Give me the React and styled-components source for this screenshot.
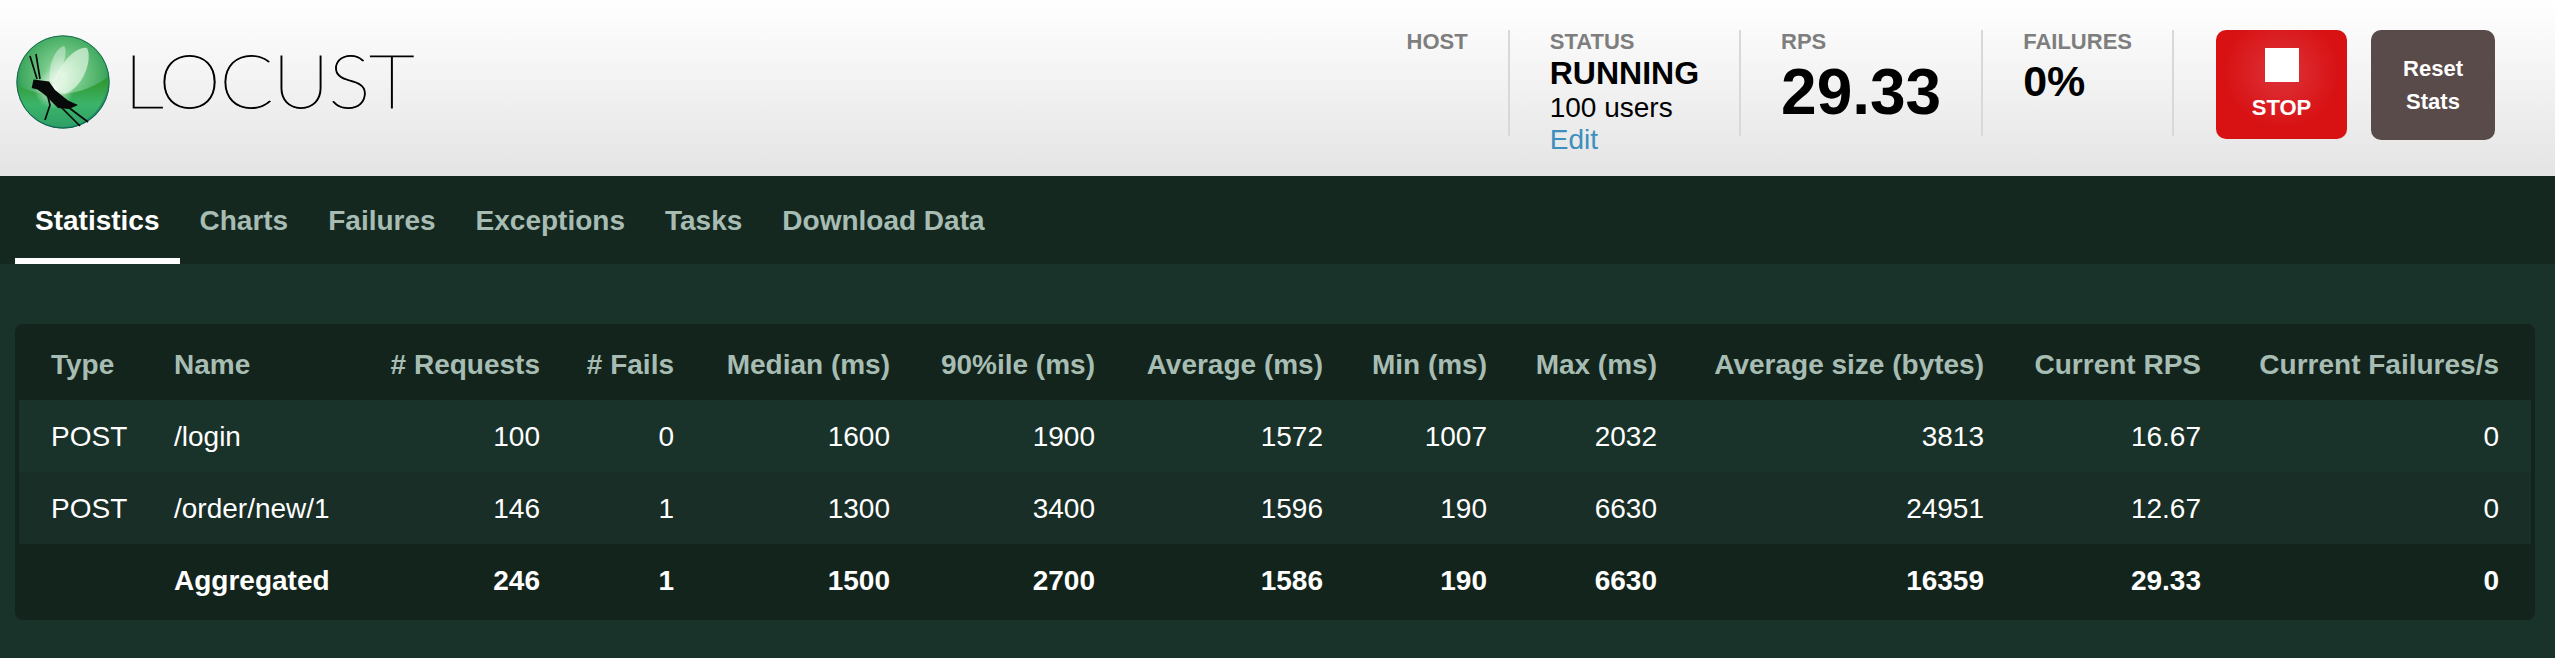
import React from 'react'
import styled, { createGlobalStyle } from 'styled-components'

const GlobalStyle = createGlobalStyle`
  body {
    margin: 0;
    background: #1a332a;
    font-family: "Liberation Sans", Arial, sans-serif;
  }
`

const columns = [
  { label: 'Type', width: 123 },
  { label: 'Name', width: 230 },
  { label: '# Requests', width: 200, right: true },
  { label: '# Fails', width: 134, right: true },
  { label: 'Median (ms)', width: 216, right: true },
  { label: '90%ile (ms)', width: 205, right: true },
  { label: 'Average (ms)', width: 228, right: true },
  { label: 'Min (ms)', width: 164, right: true },
  { label: 'Max (ms)', width: 170, right: true },
  { label: 'Average size (bytes)', width: 327, right: true },
  { label: 'Current RPS', width: 217, right: true },
  { label: 'Current Failures/s', width: 298, right: true },
]

const rows = [
  ['POST', '/login', '100', '0', '1600', '1900', '1572', '1007', '2032', '3813', '16.67', '0'],
  ['POST', '/order/new/1', '146', '1', '1300', '3400', '1596', '190', '6630', '24951', '12.67', '0'],
  ['', 'Aggregated', '246', '1', '1500', '2700', '1586', '190', '6630', '16359', '29.33', '0'],
]

const tabs = ['Statistics', 'Charts', 'Failures', 'Exceptions', 'Tasks', 'Download Data']

const LocustIcon = () => (
  <LogoSvg viewBox="0 0 94 94">
    <defs>
      <radialGradient id="orb" cx="50%" cy="42%" r="58%">
        <stop offset="0%" stopColor="#d8f3d8" />
        <stop offset="35%" stopColor="#74c987" />
        <stop offset="78%" stopColor="#3fa85f" />
        <stop offset="100%" stopColor="#12806a" />
      </radialGradient>
      <linearGradient id="lower" x1="0" y1="0" x2="0" y2="1">
        <stop offset="0%" stopColor="#2f9426" />
        <stop offset="55%" stopColor="#3bb46a" />
        <stop offset="100%" stopColor="#2f9f66" />
      </linearGradient>
      <radialGradient id="glow" cx="50%" cy="50%" r="50%">
        <stop offset="0%" stopColor="#ffffff" stopOpacity="0.95" />
        <stop offset="100%" stopColor="#ffffff" stopOpacity="0" />
      </radialGradient>
    </defs>
    <circle cx="47" cy="47" r="46.5" fill="url(#orb)" />
    <path d="M2 50 C20 62 60 66 92 42 C92 70 72 92 47 92 C20 92 3 72 2 50 Z" fill="url(#lower)" />
    <circle cx="38" cy="54" r="20" fill="url(#glow)" />
    <path d="M34 46 C32 32 38 14 48 11 C52 14 48 34 38 48 Z" fill="#ffffff" fillOpacity="0.4" />
    <path d="M37 50 C42 32 58 11 71 13 C77 24 67 54 48 59 Z" fill="#e6f8e6" fillOpacity="0.68" />
    <circle cx="47" cy="47" r="46.2" fill="none" stroke="#0d5a46" strokeWidth="0.8" />
    <path
      d="M15.7 53 L17.5 44.5 L33 46.5 L39 55 L52 65.5 L62 70 L53 74 L42 73 L29 60 L21.5 54.5 Z"
      fill="#070a08"
    />
    <path
      d="M21 44 L14 21 M24 44 L20 19 M31 58 L34 70 L29 85 M43 70 L64 91 M52 72 L72 87"
      fill="none"
      stroke="#070a08"
      strokeWidth="1.7"
    />
  </LogoSvg>
)

export default function App() {
  return (
    <Page>
      <GlobalStyle />
      <Header>
        <Brand>
          <LocustIcon />
          <Wordmark>LOCUST</Wordmark>
        </Brand>
        <Stats>
          <Stat>
            <Label>HOST</Label>
          </Stat>
          <Stat>
            <Label>STATUS</Label>
            <StatusText>RUNNING</StatusText>
            <UsersText>100 users</UsersText>
            <EditLink>Edit</EditLink>
          </Stat>
          <Stat>
            <Label>RPS</Label>
            <RpsValue>29.33</RpsValue>
          </Stat>
          <Stat>
            <Label>FAILURES</Label>
            <FailValue>0%</FailValue>
          </Stat>
          <StopButton>
            <StopSquare />
            <span>STOP</span>
          </StopButton>
          <ResetButton>
            <span>Reset</span>
            <span>Stats</span>
          </ResetButton>
        </Stats>
      </Header>
      <Nav>
        {tabs.map((tab, i) => (
          <Tab key={tab} $active={i === 0}>
            {tab}
          </Tab>
        ))}
      </Nav>
      <Main>
        <Paper>
          <StatsTable>
            <colgroup>
              {columns.map((c) => (
                <Col key={c.label} $width={c.width} />
              ))}
            </colgroup>
            <thead>
              <tr>
                {columns.map((c) => (
                  <HeadCell key={c.label} $right={c.right}>
                    {c.label}
                  </HeadCell>
                ))}
              </tr>
            </thead>
            <tbody>
              {rows.map((row, r) => (
                <Row key={r} $kind={r}>
                  {row.map((val, i) => (
                    <Cell key={i} $right={columns[i].right} $bold={r === 2}>
                      {val}
                    </Cell>
                  ))}
                </Row>
              ))}
            </tbody>
          </StatsTable>
        </Paper>
      </Main>
    </Page>
  )
}

const Page = styled.div`
  min-height: 100vh;
  display: flex;
  flex-direction: column;
  background: #1a332a;
`

const Header = styled.header`
  height: 176px;
  box-sizing: border-box;
  padding: 30px 60px 0 16px;
  display: flex;
  justify-content: space-between;
  background: linear-gradient(#ffffff, #e4e4e4);
`

const Brand = styled.div`
  display: flex;
  align-items: flex-start;
  gap: 14px;
`

const LogoSvg = styled.svg`
  width: 94px;
  height: 94px;
  margin-top: 5px;
  flex: none;
`

const Wordmark = styled.span`
  font-family: "Lato", sans-serif;
  font-weight: 100;
  font-size: 74px;
  line-height: 74px;
  margin-top: 13px;
  color: #000;
  letter-spacing: -1px;
  -webkit-text-stroke: 0.9px #000;
  transform: scaleX(1.07);
  transform-origin: left center;
`

const Stats = styled.div`
  display: flex;
  align-items: flex-start;
`

const Stat = styled.div`
  height: 106px;
  padding: 0 40px;
  border-right: 2px solid #d8d8d8;
  white-space: nowrap;
`

const Label = styled.div`
  font-size: 22px;
  line-height: 24px;
  font-weight: 700;
  color: #7e7e7e;
`

const StatusText = styled.div`
  font-size: 32px;
  line-height: 38px;
  font-weight: 700;
  color: #000;
`

const UsersText = styled.div`
  font-size: 28px;
  line-height: 32px;
  color: #000;
`

const EditLink = styled.a`
  display: block;
  font-size: 28px;
  line-height: 32px;
  color: #3d8fbe;
`

const RpsValue = styled.div`
  font-size: 64px;
  line-height: 76px;
  font-weight: 700;
  color: #000;
`

const FailValue = styled.div`
  font-size: 43px;
  line-height: 54px;
  font-weight: 700;
  color: #000;
`

const StopButton = styled.div`
  width: 131px;
  height: 109px;
  box-sizing: border-box;
  margin-left: 42px;
  padding-top: 18px;
  border-radius: 10px;
  display: flex;
  flex-direction: column;
  align-items: center;
  gap: 13px;
  color: #fff;
  font-size: 22px;
  line-height: 26px;
  font-weight: 700;
  background: radial-gradient(circle at 50% 38%, #dd3035 0%, #dc2c31 14%, #d81113 62%);
`

const StopSquare = styled.div`
  width: 34px;
  height: 34px;
  background: #fff;
`

const ResetButton = styled.div`
  width: 124px;
  height: 110px;
  margin-left: 24px;
  border-radius: 10px;
  display: flex;
  flex-direction: column;
  align-items: center;
  justify-content: center;
  color: #fff;
  font-size: 22px;
  line-height: 33px;
  font-weight: 700;
  background: #5a4b4b;
`

const Nav = styled.nav`
  height: 88px;
  box-sizing: border-box;
  padding-left: 15px;
  display: flex;
  background: #152820;
`

const Tab = styled.div`
  padding: 8px 20px 0;
  display: flex;
  align-items: center;
  box-sizing: border-box;
  font-size: 28px;
  font-weight: 700;
  color: ${(p) => (p.$active ? '#ffffff' : '#a7bdb3')};
  border-bottom: 6px solid ${(p) => (p.$active ? '#ffffff' : 'transparent')};
`

const Main = styled.main`
  flex: 1;
  padding: 60px 20px 38px 15px;
`

const Paper = styled.div`
  padding: 4px;
  border-radius: 8px;
  background: #13241c;
`

const StatsTable = styled.table`
  width: 2512px;
  table-layout: fixed;
  border-collapse: collapse;
`

const Col = styled.col`
  width: ${(p) => p.$width}px;
`

const HeadCell = styled.th`
  height: 72px;
  padding: 2px 32px 0 ${(p) => (p.$right ? '0' : '32px')};
  box-sizing: border-box;
  font-size: 28px;
  font-weight: 700;
  white-space: nowrap;
  color: #a7bdb3;
  text-align: ${(p) => (p.$right ? 'right' : 'left')};
`

const rowBackgrounds = ['#1a332a', '#182e26', '#13241c']

const Row = styled.tr`
  background: ${(p) => rowBackgrounds[p.$kind]};
`

const Cell = styled.td`
  height: 72px;
  padding: 2px 32px 0 ${(p) => (p.$right ? '0' : '32px')};
  box-sizing: border-box;
  font-size: 28px;
  white-space: nowrap;
  color: #ffffff;
  font-weight: ${(p) => (p.$bold ? 700 : 400)};
  text-align: ${(p) => (p.$right ? 'right' : 'left')};
`
